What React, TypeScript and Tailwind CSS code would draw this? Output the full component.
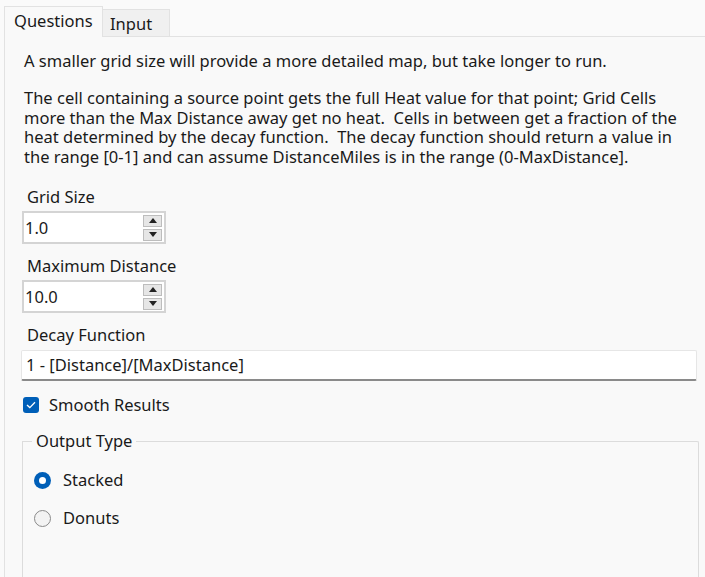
import React from "react";

const font = { fontFamily: '"Noto Sans", "Open Sans", sans-serif' };

function Spinner() {
  return (
    <div className="flex flex-col justify-center gap-[2px] pr-[2px] h-full">
      <div className="w-[19px] h-[12px] bg-[#e6e6e6] border border-[#bdbdbd] flex items-center justify-center">
        <svg width="8" height="5" viewBox="0 0 8 5"><path d="M4 0 L8 5 L0 5 Z" fill="#222" /></svg>
      </div>
      <div className="w-[19px] h-[12px] bg-[#e6e6e6] border border-[#bdbdbd] flex items-center justify-center">
        <svg width="8" height="5" viewBox="0 0 8 5"><path d="M0 0 L8 0 L4 5 Z" fill="#222" /></svg>
      </div>
    </div>
  );
}

function NumberBox({ value }: { value: string }) {
  return (
    <div className="w-[144px] h-[33px] border-2 border-[#d4d4d4] bg-white flex items-center justify-between">
      <span className="pl-[1px] text-[#1a1a1a]">{value}</span>
      <Spinner />
    </div>
  );
}

export default function App() {
  return (
    <div className="w-[705px] h-[577px] bg-[#fafafa] overflow-hidden text-[#1a1a1a] text-[16.5px] leading-[20px]" style={font}>
      <div className="flex items-end pl-[4px] pt-[5px] h-[36px]">
        <div className="w-[99px] h-[31px] bg-[#f9f9f9] border border-b-0 border-[#e2e2e2] flex items-start pl-[9px] pt-[4px] relative z-10 -mb-px">
          Questions
        </div>
        <div className="w-[67px] h-[27px] bg-[#f0f0f0] border border-l-0 border-b-0 border-[#e2e2e2] pl-[7px] pt-[4px]">
          Input
        </div>
      </div>
      <div className="h-[541px] ml-[4px] bg-[#f9f9f9] border-t border-l border-[#e2e2e2] pl-[16px] pr-[8px] pt-[14px]">
        <p className="ml-[3px]">
          A smaller grid size will provide a more detailed map, but take longer to run.
        </p>
        <div className="ml-[3px] mt-[17px] w-[680px] whitespace-nowrap flex flex-col">
          <div className="h-[19.5px] leading-[19.5px]">The cell containing a source point gets the full Heat value for that point; Grid Cells</div>
          <div className="h-[19.5px] leading-[19.5px]">more than the Max Distance away get no heat.&nbsp; Cells in between get a fraction of the</div>
          <div className="h-[19.5px] leading-[19.5px]">heat determined by the decay function.&nbsp; The decay function should return a value in</div>
          <div className="h-[19.5px] leading-[19.5px]">the range [0-1] and can assume DistanceMiles is in the range (0-MaxDistance].</div>
        </div>
        <div className="mt-[21px] ml-[6px]">Grid Size</div>
        <div className="mt-[4px] ml-[1px]">
          <NumberBox value="1.0" />
        </div>
        <div className="mt-[12px] ml-[6px]">Maximum Distance</div>
        <div className="mt-[4px] ml-[1px]">
          <NumberBox value="10.0" />
        </div>
        <div className="mt-[12px] ml-[6px]">Decay Function</div>
        <div className="mt-[5px] ml-0 w-[676px] h-[31px] bg-white border border-[#e6e6e6] border-b-2 border-b-[#8a8a8a] rounded-[2px] flex items-center pl-[4px]">
          1 - [Distance]/[MaxDistance]
        </div>
        <div className="mt-[14px] ml-[2px] flex items-center gap-[10px]">
          <div className="w-[16px] h-[16px] rounded-[3px] bg-[#005fb8] flex items-center justify-center">
            <svg width="10" height="8" viewBox="0 0 10 8"><path d="M1 4 L3.8 6.6 L9 1.2" stroke="white" strokeWidth="1.3" fill="none" /></svg>
          </div>
          <span>Smooth Results</span>
        </div>
        <div className="relative mt-[26px] ml-[1px] w-[677px] h-[200px] border border-[#dcdcdc] border-b-0 rounded-tr-[2px]">
          <div className="absolute -top-[11px] left-[9px] px-[4px] bg-[#f9f9f9]">Output Type</div>
          <div className="pt-[28px] pl-[11px] flex flex-col gap-[18px]">
            <div className="flex items-center gap-[12px]">
              <div className="w-[17px] h-[17px] rounded-full bg-[#005fb8] flex items-center justify-center">
                <div className="w-[7px] h-[7px] rounded-full bg-white" />
              </div>
              <span>Stacked</span>
            </div>
            <div className="flex items-center gap-[12px]">
              <div className="w-[17px] h-[17px] rounded-full border border-[#8a8a8a] bg-[#f3f3f3]" />
              <span>Donuts</span>
            </div>
          </div>
        </div>
      </div>
    </div>
  );
}
